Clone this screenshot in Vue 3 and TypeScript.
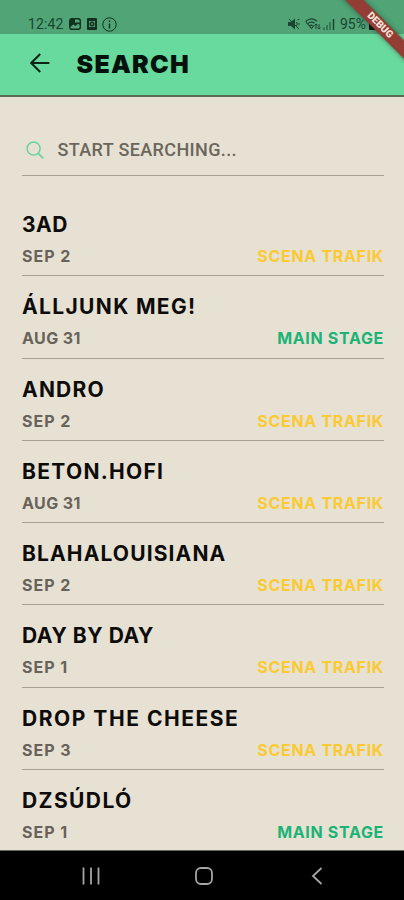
<script setup lang="ts">
interface Act {
  name: string
  date: string
  stage: 'SCENA TRAFIK' | 'MAIN STAGE'
  tracking: number
}

const acts: Act[] = [
  { name: '3AD', date: 'SEP 2', stage: 'SCENA TRAFIK', tracking: 0.5 },
  { name: 'ÁLLJUNK MEG!', date: 'AUG 31', stage: 'MAIN STAGE', tracking: 1.35 },
  { name: 'ANDRO', date: 'SEP 2', stage: 'SCENA TRAFIK', tracking: 1.2 },
  { name: 'BETON.HOFI', date: 'AUG 31', stage: 'SCENA TRAFIK', tracking: 1.3 },
  { name: 'BLAHALOUISIANA', date: 'SEP 2', stage: 'SCENA TRAFIK', tracking: 1.13 },
  { name: 'DAY BY DAY', date: 'SEP 1', stage: 'SCENA TRAFIK', tracking: 0.55 },
  { name: 'DROP THE CHEESE', date: 'SEP 3', stage: 'SCENA TRAFIK', tracking: 1.53 },
  { name: 'DZSÚDLÓ', date: 'SEP 1', stage: 'MAIN STAGE', tracking: 1.4 },
]
</script>

<template>
  <div class="phone">
    <header class="top">
      <div class="status">
        <div class="status-left">
          <span class="time">12:42</span>
          <svg class="s-icon" width="12" height="12" viewBox="0 0 12 12">
            <rect x="0.7" y="0.7" width="10.6" height="10.6" rx="2.2" fill="none" stroke="currentColor" stroke-width="1.4" />
            <path d="M1 1h5v3.5h5V7L9 5.8 6.5 8 4.5 6.5 1 9z" fill="currentColor" />
          </svg>
          <svg class="s-icon second" width="10" height="12" viewBox="0 0 10 12">
            <path fill-rule="evenodd" d="M1 0h8q1 0 1 1v10q0 1-1 1H1q-1 0-1-1V1q0-1 1-1zM2 3v6h6V3z" fill="currentColor" />
            <circle cx="5" cy="6" r="1.7" fill="none" stroke="currentColor" stroke-width="1.6" />
          </svg>
          <svg class="s-icon third" width="15" height="15" viewBox="0 0 15 15">
            <circle cx="7.5" cy="7.5" r="6.7" fill="none" stroke="currentColor" />
            <path d="M7.5 3.5v1.6M7.5 6.5v5" stroke="currentColor" stroke-width="1.4" />
          </svg>
        </div>
        <div class="status-right">
          <svg width="12" height="12" viewBox="0 0 12 12">
            <path d="M0 4h3l4-3.5v11L3 8H0z" fill="currentColor" />
            <path d="M1 1l10 10M8.5 4q1.5 2 0 4M9.5 2l2-1M10 6h2" fill="none" stroke="currentColor" />
          </svg>
          <svg class="wifi" width="16" height="12" viewBox="0 0 16 12">
            <path d="M.6 3.5Q6-1.5 12 3.2M2.6 5.8Q6 2.8 9.5 5.3M4.5 8Q6 6.5 7.7 7.7M1 4l5.5 6.5L9 7.5" fill="none" stroke="currentColor" stroke-width="1.1" />
            <path d="M11 6v5M9.5 7.8L11 6l1.4 1.8M14 6v5M12.6 9.4L14 11l1.4-1.6" fill="none" stroke="currentColor" />
          </svg>
          <svg class="signal" width="12" height="12" viewBox="0 0 12 12">
            <path d="M1 9.5V12M4 7V12M7 4V12" stroke="currentColor" stroke-width="1.4" opacity=".65" />
            <path d="M10.5 1V12" stroke="currentColor" stroke-width="1.5" />
          </svg>
          <span class="percent">95%</span>
          <svg class="battery" width="9" height="12" viewBox="0 0 9 12">
            <path d="M3 0h3v1h2q1 0 1 1v9q0 1-1 1H1q-1 0-1-1V2q0-1 1-1h2z" fill="currentColor" />
          </svg>
        </div>
      </div>
      <div class="bar">
        <svg class="back" width="20" height="20" viewBox="0 0 20 20">
          <path d="M19.4 10H1.2M10.2 1L1.2 10l9 9" fill="none" stroke="#0b2416" stroke-width="2" />
        </svg>
        <h1>SEARCH</h1>
      </div>
    </header>
    <main>
      <div class="search">
        <svg width="18" height="18" viewBox="0 0 18 18">
          <circle cx="7.6" cy="7.6" r="6.5" fill="none" stroke="#65d49c" stroke-width="1.5" />
          <path d="M12.3 12.3l5 5" stroke="#65d49c" stroke-width="1.8" />
        </svg>
        <span>START SEARCHING...</span>
      </div>
      <ul>
        <li v-for="act in acts" :key="act.name">
          <div class="name" :style="{ letterSpacing: act.tracking + 'px' }">{{ act.name }}</div>
          <div class="meta">
            <span class="date" :class="{ tight: act.date.startsWith('AUG') }">{{ act.date }}</span>
            <span class="stage" :class="{ main: act.stage === 'MAIN STAGE' }">{{ act.stage }}</span>
          </div>
        </li>
      </ul>
    </main>
    <nav>
      <svg width="18" height="18" viewBox="0 0 18 18">
        <path d="M1.5 0.5v17M9 .5v17M16.5 .5v17" stroke="#a5a5a5" stroke-width="1.8" />
      </svg>
      <svg width="18" height="18" viewBox="0 0 18 18">
        <rect x="1" y="1" width="16" height="16" rx="5" fill="none" stroke="#a5a5a5" stroke-width="1.8" />
      </svg>
      <svg width="18" height="18" viewBox="0 0 18 18">
        <path d="M13.5 1L5 9l8.5 8" fill="none" stroke="#a5a5a5" stroke-width="1.8" />
      </svg>
    </nav>
    <div class="ribbon">DEBUG</div>
  </div>
</template>

<style>
body {
  background: #e7e1d3;
}
</style>

<style scoped>
.phone {
  position: relative;
  width: 404px;
  height: 900px;
  overflow: hidden;
  display: flex;
  flex-direction: column;
  background: #e7e1d3;
  font-family: Inter, "Liberation Sans", sans-serif;
  box-sizing: border-box;
}
.phone * {
  box-sizing: border-box;
}
svg {
  display: block;
  flex: none;
}
.top {
  height: 97px;
  flex: none;
  background: #69da9d;
  border-bottom: 2px solid #5b6b54;
}
.status {
  height: 34px;
  padding: 14px 26px 0 28px;
  display: flex;
  justify-content: space-between;
  background: #50a476;
  color: #1c4530;
  font: 14px/20px Roboto, sans-serif;
}
.status-left,
.status-right {
  display: flex;
  align-items: center;
  height: 20px;
}
.time {
  width: 41px;
  letter-spacing: 0.1px;
}
.status-left .s-icon {
  color: #12321f;
}
.status-left .second {
  margin-left: 6px;
}
.status-left .third {
  margin-left: 5px;
}
.wifi {
  margin-left: 5px;
}
.signal {
  margin-left: 2px;
}
.percent {
  margin-left: 5px;
  width: 29px;
}
.battery {
  color: #06170d;
}
.bar {
  height: 61px;
  padding: 0 30px 3px;
  display: flex;
  align-items: center;
}
h1 {
  margin: 2px 0 0 26.5px;
  font-size: 25px;
  line-height: 30px;
  font-weight: 900;
  letter-spacing: 1.25px;
  color: #03120a;
}
main {
  flex: 1;
  min-height: 0;
  overflow: hidden;
  padding: 28px 20px 0 22px;
}
.search {
  height: 51px;
  padding: 0 4px;
  display: flex;
  align-items: center;
  gap: 13.5px;
  border-bottom: 1px solid #a6a296;
  color: #6b665c;
  font: 500 18px/24px Roboto, sans-serif;
  letter-spacing: 0.37px;
}
ul {
  list-style: none;
  margin: 18px 0 0;
  padding: 0;
}
li {
  height: 82.25px;
  padding-top: 18px;
  border-bottom: 1px solid #a6a296;
}
.name {
  font-size: 21px;
  line-height: 26px;
  font-weight: 700;
  color: #0d0c0a;
  white-space: nowrap;
}
.meta {
  margin-top: 8px;
  display: flex;
  justify-content: space-between;
  font-size: 16px;
  line-height: 20px;
  font-weight: 700;
  white-space: nowrap;
}
.date {
  color: #68635a;
  letter-spacing: 1px;
}
.date.tight {
  letter-spacing: 0.4px;
}
.stage {
  color: #fbca32;
  letter-spacing: 0.68px;
}
.stage.main {
  color: #1cb376;
}
nav {
  height: 50px;
  flex: none;
  display: flex;
  justify-content: space-between;
  padding: 16px 78px 0 81.5px;
  background: #000;
  border-top: 1px solid #68685c;
}
.ribbon {
  position: absolute;
  left: 329.5px;
  top: 19px;
  width: 100px;
  height: 12.5px;
  transform: rotate(45deg);
  background: #943d35;
  color: #f5e4dc;
  font: 900 10px/12.5px Roboto, sans-serif;
  text-align: center;
  box-shadow: 0 0 5px rgba(0, 0, 0, 0.45);
}
</style>
